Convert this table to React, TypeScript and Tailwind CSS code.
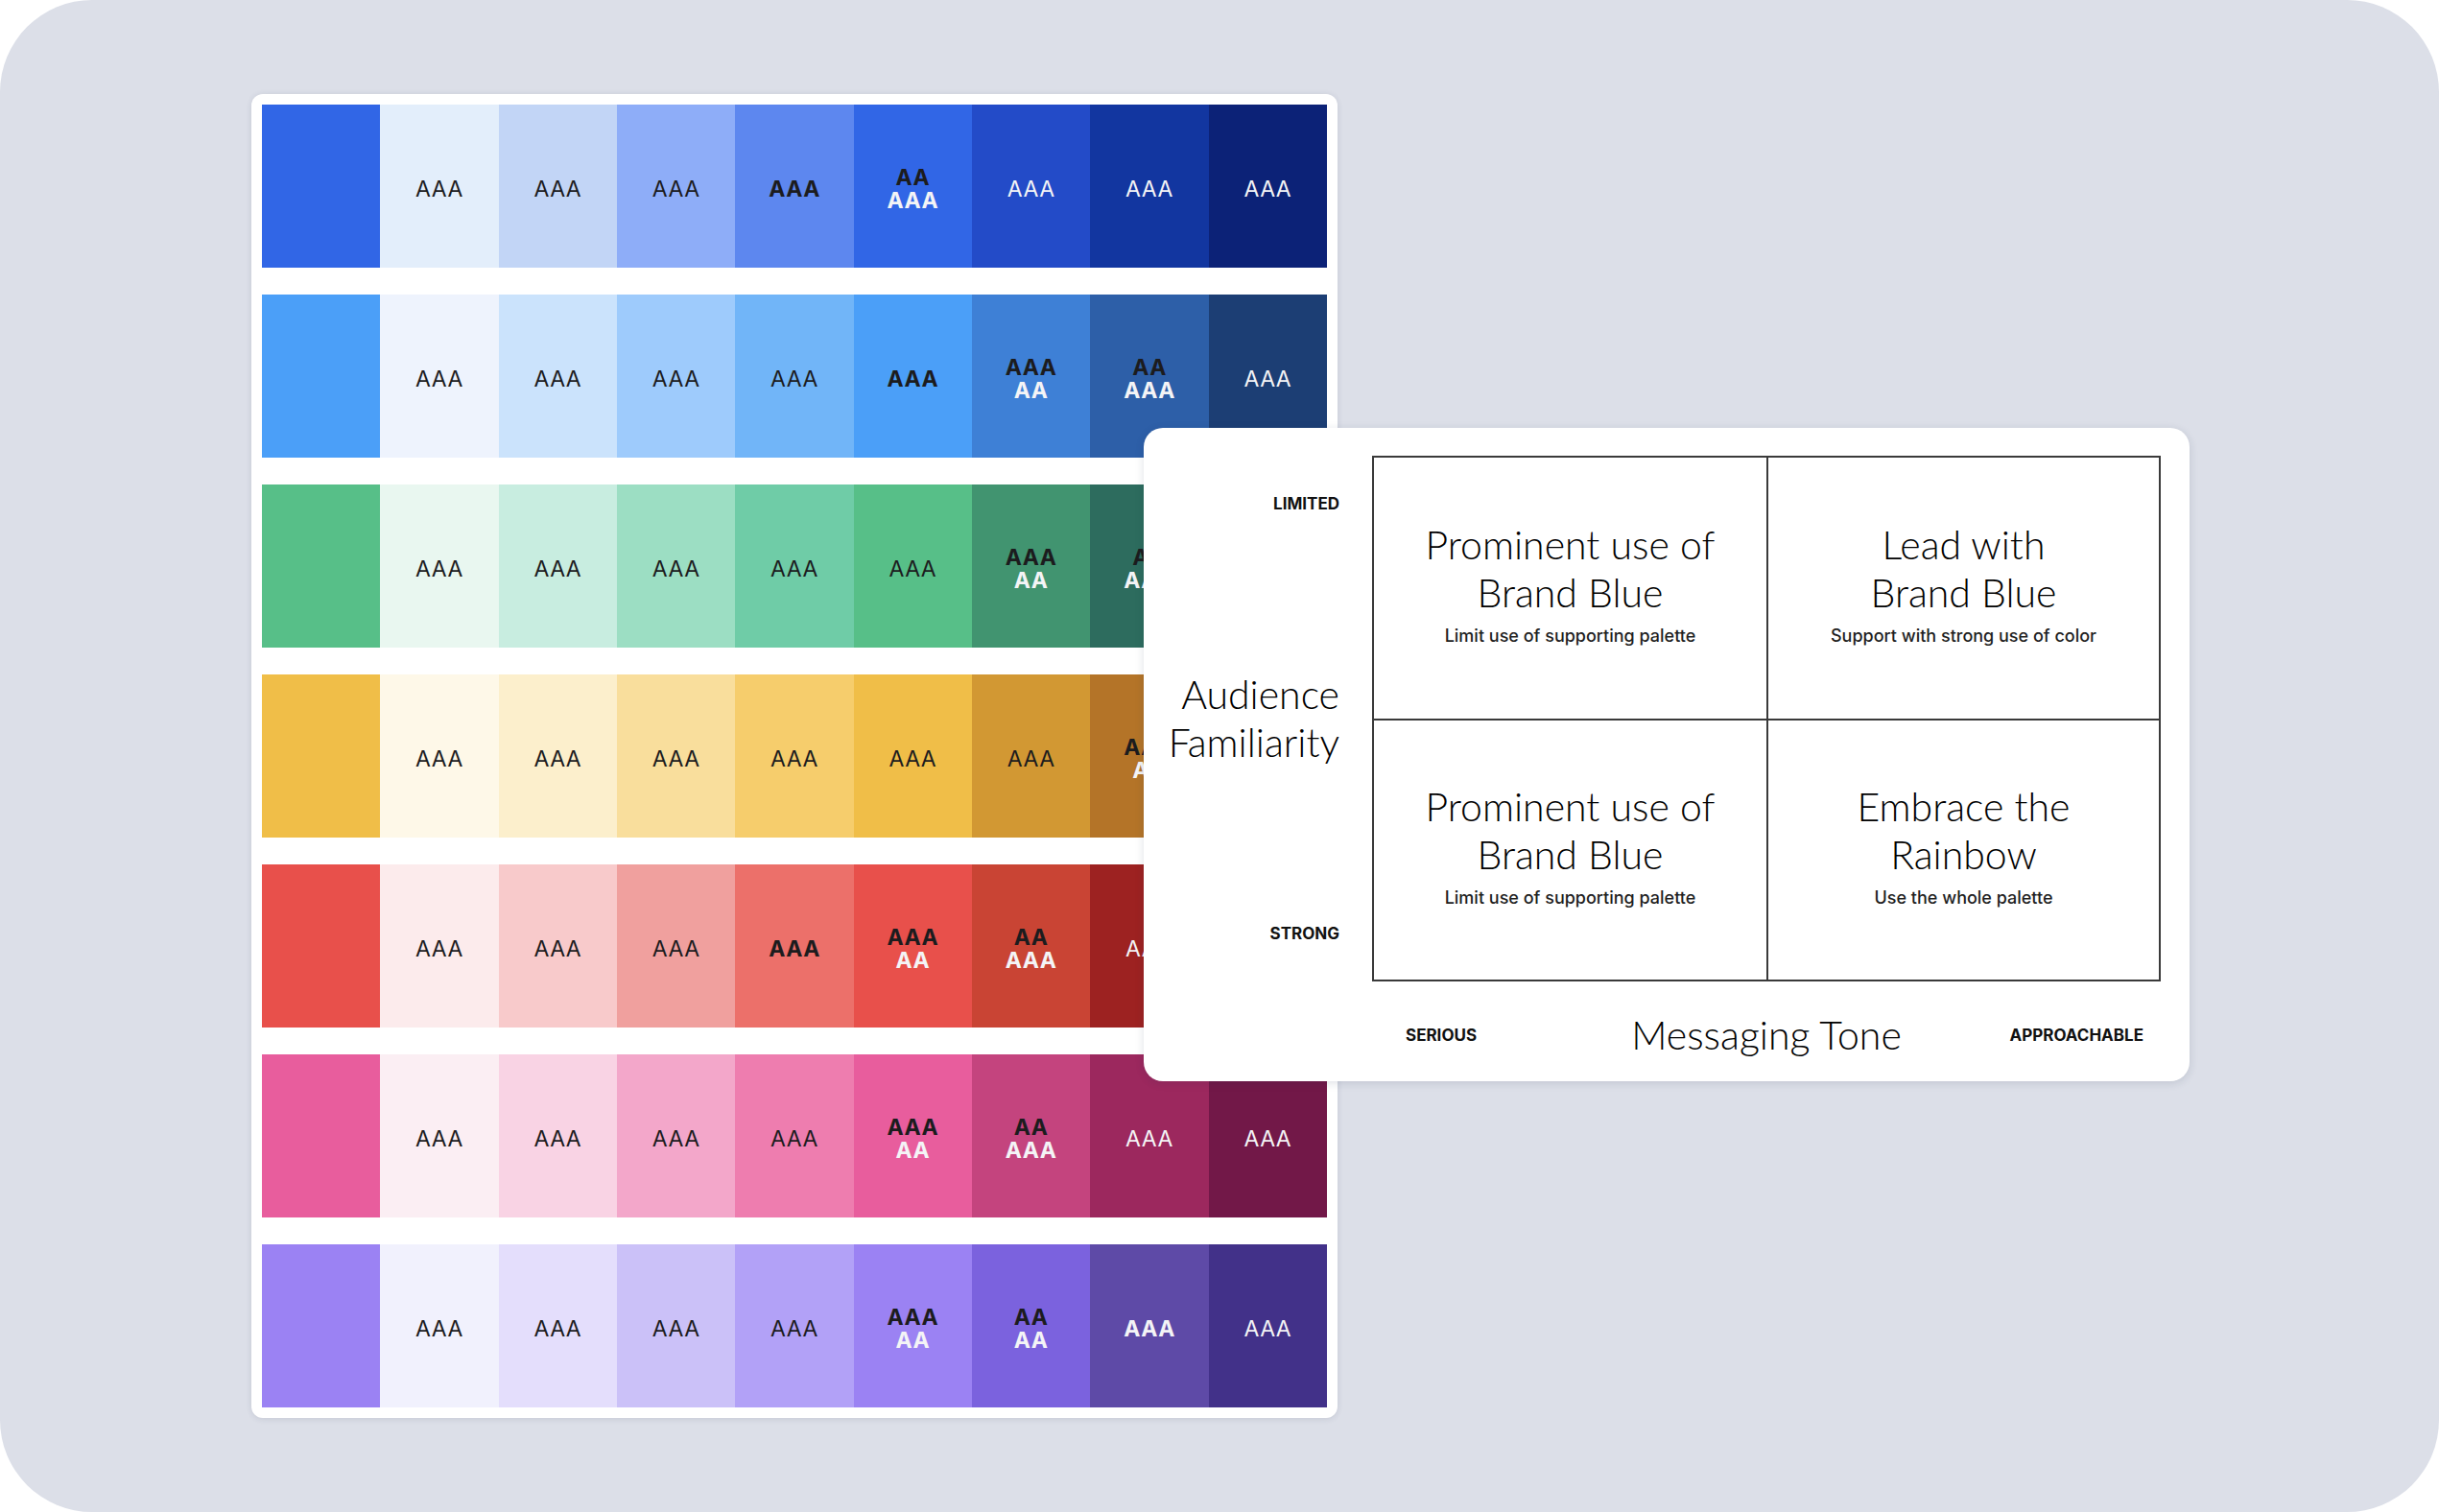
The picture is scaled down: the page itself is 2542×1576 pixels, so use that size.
import React from "react";

type Line = { text: string; white?: boolean; bold?: boolean };
type Cell = { bg: string; lines: Line[] };

const r: Line[] = [{ text: "AAA" }];
const rw: Line[] = [{ text: "AAA", white: true }];
const bd: Line[] = [{ text: "AAA", bold: true }];
const bw: Line[] = [{ text: "AAA", white: true, bold: true }];
const st = (a: string, b: string): Line[] => [
  { text: a, bold: true },
  { text: b, bold: true, white: true },
];

const rows: Cell[][] = [
  [
    { bg: "bg-[#3166e6]", lines: [] },
    { bg: "bg-[#e3eefb]", lines: r },
    { bg: "bg-[#c2d5f6]", lines: r },
    { bg: "bg-[#8eadf8]", lines: r },
    { bg: "bg-[#5d87ef]", lines: bd },
    { bg: "bg-[#3166e6]", lines: st("AA", "AAA") },
    { bg: "bg-[#234bc8]", lines: rw },
    { bg: "bg-[#1236a0]", lines: rw },
    { bg: "bg-[#0c2277]", lines: rw },
  ],
  [
    { bg: "bg-[#4b9ff8]", lines: [] },
    { bg: "bg-[#eef3fd]", lines: r },
    { bg: "bg-[#cbe3fc]", lines: r },
    { bg: "bg-[#9ecbfc]", lines: r },
    { bg: "bg-[#71b5f8]", lines: r },
    { bg: "bg-[#4b9ff8]", lines: bd },
    { bg: "bg-[#3e80d6]", lines: st("AAA", "AA") },
    { bg: "bg-[#2d5fa8]", lines: st("AA", "AAA") },
    { bg: "bg-[#1c3e74]", lines: rw },
  ],
  [
    { bg: "bg-[#57bf88]", lines: [] },
    { bg: "bg-[#e9f7f0]", lines: r },
    { bg: "bg-[#c8ede0]", lines: r },
    { bg: "bg-[#9cdec3]", lines: r },
    { bg: "bg-[#6fcca7]", lines: r },
    { bg: "bg-[#57bf88]", lines: r },
    { bg: "bg-[#419470]", lines: st("AAA", "AA") },
    { bg: "bg-[#2d6c5e]", lines: st("AA", "AAA") },
    { bg: "bg-[#1f4d44]", lines: rw },
  ],
  [
    { bg: "bg-[#f0be48]", lines: [] },
    { bg: "bg-[#fef8e8]", lines: r },
    { bg: "bg-[#fcefcc]", lines: r },
    { bg: "bg-[#f9de9c]", lines: r },
    { bg: "bg-[#f6cd6c]", lines: r },
    { bg: "bg-[#f0be48]", lines: r },
    { bg: "bg-[#d29833]", lines: r },
    { bg: "bg-[#b47428]", lines: st("AAA", "AA") },
    { bg: "bg-[#8a5520]", lines: rw },
  ],
  [
    { bg: "bg-[#e8504b]", lines: [] },
    { bg: "bg-[#fcebec]", lines: r },
    { bg: "bg-[#f8cacb]", lines: r },
    { bg: "bg-[#f0a09e]", lines: r },
    { bg: "bg-[#ec706a]", lines: bd },
    { bg: "bg-[#e8504b]", lines: st("AAA", "AA") },
    { bg: "bg-[#c94434]", lines: st("AA", "AAA") },
    { bg: "bg-[#9d2221]", lines: rw },
    { bg: "bg-[#751a1a]", lines: rw },
  ],
  [
    { bg: "bg-[#e85d9d]", lines: [] },
    { bg: "bg-[#fbeef3]", lines: r },
    { bg: "bg-[#f9d3e4]", lines: r },
    { bg: "bg-[#f3a7ca]", lines: r },
    { bg: "bg-[#ee7daf]", lines: r },
    { bg: "bg-[#e85d9d]", lines: st("AAA", "AA") },
    { bg: "bg-[#c4447e]", lines: st("AA", "AAA") },
    { bg: "bg-[#9c285e]", lines: rw },
    { bg: "bg-[#721848]", lines: rw },
  ],
  [
    { bg: "bg-[#9b82f3]", lines: [] },
    { bg: "bg-[#f1f1fd]", lines: r },
    { bg: "bg-[#e4defc]", lines: r },
    { bg: "bg-[#cbc1f8]", lines: r },
    { bg: "bg-[#b2a1f7]", lines: r },
    { bg: "bg-[#9b82f3]", lines: st("AAA", "AA") },
    { bg: "bg-[#7b62de]", lines: st("AA", "AA") },
    { bg: "bg-[#5e4aa7]", lines: bw },
    { bg: "bg-[#423189]", lines: rw },
  ],
];

function Swatch({ cell }: { cell: Cell }) {
  const stacked = cell.lines.length > 1;
  return (
    <div className={`${cell.bg} flex flex-col items-center justify-center pt-[6px]`}>
      {cell.lines.map((l, i) => (
        <span
          key={i}
          className={[
            "font-['Inter',sans-serif] text-[23px] tracking-[0.5px]",
            stacked ? "leading-[24px]" : "leading-[28px]",
            l.bold ? "font-bold" : "font-normal",
            l.white ? "text-[#f4f4f6]" : "text-[#1c1c1e]",
          ].join(" ")}
        >
          {l.text}
        </span>
      ))}
    </div>
  );
}

function Quadrant({
  title,
  sub,
  className,
}: {
  title: string[];
  sub: string;
  className?: string;
}) {
  return (
    <div className={`flex flex-col items-center justify-center text-center pb-[10px] ${className ?? ""}`}>
      <div className="font-['Lato',sans-serif] font-light text-[41px] leading-[50px] text-black">
        {title.map((t, i) => (
          <div key={i}>{t}</div>
        ))}
      </div>
      <div className="mt-[9px] font-['Inter',sans-serif] font-medium text-[18px] leading-[22px] text-[#1f1f1f]">
        {sub}
      </div>
    </div>
  );
}

export default function App() {
  return (
    <div className="w-[2542px] h-[1576px] bg-white">
      <div className="relative w-[2542px] h-[1576px] rounded-[96px] bg-[#dcdfe8] overflow-hidden pl-[262px] pt-[98px]">
        {/* Palette panel */}
        <div className="w-[1132px] p-[11px] bg-white rounded-[12px] shadow-[0_1px_6px_rgba(30,40,70,0.12)]">
          <div className="flex flex-col gap-[28px]">
            {rows.map((row, ri) => (
              <div key={ri} className="grid grid-cols-9 h-[170px]">
                {row.map((c, ci) => (
                  <Swatch key={ci} cell={c} />
                ))}
              </div>
            ))}
          </div>
        </div>

        {/* Matrix card */}
        <div className="absolute left-[1192px] top-[446px] w-[1090px] h-[681px] rounded-[20px] bg-white shadow-[0_2px_10px_rgba(30,40,70,0.14)] pt-[29px] pr-[30px]">
          <div className="flex">
            <div className="w-[238px] h-[548px] pr-[34px] py-[39px] flex flex-col justify-between items-end text-right">
              <div className="font-['Inter',sans-serif] font-bold text-[17px] leading-[22px] text-[#111]">
                LIMITED
              </div>
              <div className="font-['Lato',sans-serif] font-light text-[41px] leading-[50px] text-black">
                <div>Audience</div>
                <div>Familiarity</div>
              </div>
              <div className="font-['Inter',sans-serif] font-bold text-[17px] leading-[22px] text-[#111]">
                STRONG
              </div>
            </div>
            <div className="w-[822px] h-[548px] border-2 border-[#3a3a3a] grid grid-cols-2 grid-rows-2">
              <Quadrant title={["Prominent use of", "Brand Blue"]} sub="Limit use of supporting palette" />
              <Quadrant
                title={["Lead with", "Brand Blue"]}
                sub="Support with strong use of color"
                className="border-l-2 border-[#3a3a3a]"
              />
              <Quadrant
                title={["Prominent use of", "Brand Blue"]}
                sub="Limit use of supporting palette"
                className="border-t-2 border-[#3a3a3a]"
              />
              <Quadrant
                title={["Embrace the", "Rainbow"]}
                sub="Use the whole palette"
                className="border-l-2 border-t-2 border-[#3a3a3a]"
              />
            </div>
          </div>
          <div className="ml-[238px] w-[822px] mt-[31px] grid grid-cols-[1fr_auto_1fr] items-center">
            <div className="pl-[35px] font-['Inter',sans-serif] font-bold text-[17px] leading-[22px] text-[#111]">
              SERIOUS
            </div>
            <div className="font-['Lato',sans-serif] font-light text-[41px] leading-[50px] text-black">
              Messaging Tone
            </div>
            <div className="pr-[18px] text-right font-['Inter',sans-serif] font-bold text-[17px] leading-[22px] text-[#111]">
              APPROACHABLE
            </div>
          </div>
        </div>
      </div>
    </div>
  );
}
